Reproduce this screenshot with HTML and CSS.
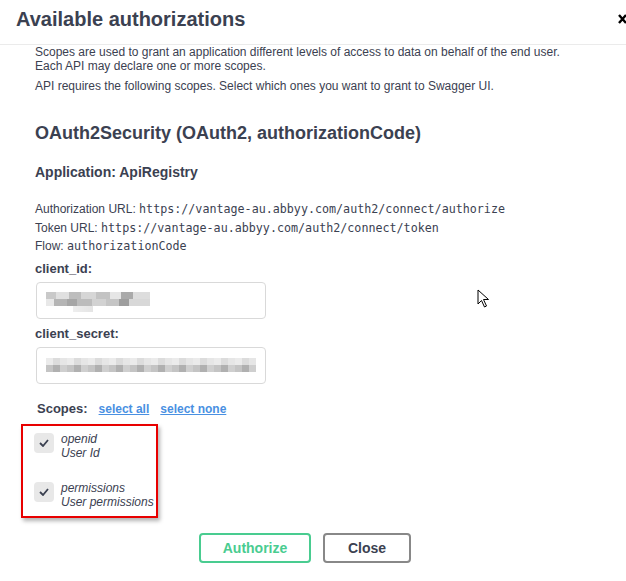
FILE: index.html
```
<!DOCTYPE html>
<html lang="en">
<head>
    <meta charset="UTF-8">
    <meta name="viewport" content="width=device-width, initial-scale=1.0">
    <title>Available authorizations</title>
    <link rel="stylesheet" href="styles.css">
</head>
<body>

    <!-- Cabecalho do modal -->
    <div class="modal-header">
        <h3>Available authorizations</h3>
        <svg class="close-x" width="8" height="10" viewBox="0 0 8 10">
            <path d="M1 1 L8 9 M8 1 L1 9" stroke="#000" stroke-width="2.4" fill="none"/>
        </svg>
    </div>

    <div class="modal-body">
        <p class="desc">Scopes are used to grant an application different levels of access to data on behalf of the end user.<br>Each API may declare one or more scopes.</p>
        <p class="desc second">API requires the following scopes. Select which ones you want to grant to Swagger UI.</p>

        <h4 class="scheme">OAuth2Security (OAuth2, authorizationCode)</h4>
        <h6 class="app">Application: ApiRegistry</h6>

        <div class="urls">
            <p>Authorization URL: <code>https://vantage-au.abbyy.com/auth2/connect/authorize</code></p>
            <p>Token URL: <code>https://vantage-au.abbyy.com/auth2/connect/token</code></p>
            <p>Flow: <code>authorizationCode</code></p>
        </div>

        <label class="field-label first">client_id:</label>
        <div class="input-box">
            <div class="blur blur-id"></div>
        </div>

        <label class="field-label">client_secret:</label>
        <div class="input-box">
            <div class="blur blur-secret"></div>
        </div>

        <div class="scopes-row">
            <span class="scopes-title">Scopes:</span>
            <a href="#">select all</a>
            <a href="#">select none</a>
        </div>

        <!-- Lista de scopes -->
        <div class="scope-list">
            <div class="scope">
                <span class="check">
                    <svg width="10" height="8" viewBox="0 0 10 8"><path d="M1 4 L4 7 L9 1" stroke="#3b4151" stroke-width="1.8" fill="none"/></svg>
                </span>
                <div class="scope-text">
                    <span>openid</span>
                    <span>User Id</span>
                </div>
            </div>
            <div class="scope">
                <span class="check">
                    <svg width="10" height="8" viewBox="0 0 10 8"><path d="M1 4 L4 7 L9 1" stroke="#3b4151" stroke-width="1.8" fill="none"/></svg>
                </span>
                <div class="scope-text">
                    <span>permissions</span>
                    <span>User permissions</span>
                </div>
            </div>
        </div>

        <div class="buttons">
            <button class="btn authorize">Authorize</button>
            <button class="btn close">Close</button>
        </div>
    </div>

    <!-- cursor do mouse -->
    <svg class="cursor" width="14" height="20" viewBox="0 0 14 20">
        <path d="M1 1 L1 15 L4.5 11.5 L7.5 18 L9.5 17 L6.5 10.5 L11.5 10.5 Z" fill="#fff" stroke="#000" stroke-width="1"/>
    </svg>

</body>
</html>
```

FILE: styles.css
```
body {
    margin: 0;
    background: #fff;
    font-family: "Liberation Sans", Arial, sans-serif;
    color: #3b4151;
    position: relative;
    overflow: hidden;
}
.modal-header {
    display: flex;
    justify-content: space-between;
    align-items: center;
    height: 45px;
    padding-left: 16px;
    border-bottom: 1px solid #ebebeb;
    box-sizing: border-box;
}
.modal-header h3 {
    margin: 0 0 5px;
    font-size: 20px;
    font-weight: bold;
}
.close-x {
    margin-bottom: 7px;
}
.modal-body {
    padding: 0 0 0 35px;
}
.desc {
    margin: 0;
    font-size: 12px;
    line-height: 14px;
}
.desc.second {
    margin-top: 6px;
}
.scheme {
    margin: 29px 0 0;
    font-size: 18px;
    line-height: 22px;
}
.app {
    margin: 20px 0 0;
    font-size: 14px;
    line-height: 16px;
}
.urls {
    margin-top: 20px;
}
.urls p {
    margin: 0;
    font-size: 12px;
    line-height: 18.5px;
}
.urls code {
    font-family: "DejaVu Sans Mono", "Liberation Mono", monospace;
    font-size: 11.7px;
}
.field-label {
    display: block;
    margin-top: 6px;
    font-size: 13px;
    font-weight: bold;
    line-height: 18px;
}
.field-label.first {
    margin-top: 4px;
}
.input-box {
    width: 230px;
    height: 37px;
    margin: 4px 0 0 1px;
    border: 1px solid #d9d9d9;
    border-radius: 4px;
    box-sizing: border-box;
    display: flex;
    align-items: center;
    padding-left: 9px;
}
.blur {
    height: 14px;
}
.blur-id {
    width: 104px;
    height: 20px;
    margin-top: 4px;
    background:
        linear-gradient(90deg, #c9c9c9 0 10%, #e0e0e0 10% 22%, #bdbdbd 22% 34%, #d6d6d6 34% 48%, #c3c3c3 48% 62%, #e6e6e6 62% 72%, #aaa 72% 84%, #ddd 84% 100%) top / 100% 7px no-repeat,
        linear-gradient(90deg, #e8e8e8 0 8%, #b5b5b5 8% 20%, #a6a6a6 20% 30%, #bcbcbc 30% 44%, #d2d2d2 44% 58%, #c5c5c5 58% 70%, #9e9e9e 70% 80%, #d8d8d8 80% 100%) 0 7px / 100% 7px no-repeat,
        linear-gradient(90deg, #eee, #e4e4e4) 27px 14px / 20px 6px no-repeat;
}
.blur-secret {
    width: 210px;
    background:
        repeating-linear-gradient(90deg, #ebebeb 0 7px, #dcdcdc 7px 14px, #e6e6e6 14px 21px) top / 100% 7px no-repeat,
        repeating-linear-gradient(90deg, #c4c4c4 0 7px, #b0b0b0 7px 14px, #cfcfcf 14px 21px) 0 7px / 100% 7px no-repeat;
}
.scopes-row {
    display: flex;
    align-items: baseline;
    gap: 11px;
    margin-top: 17px;
    padding-left: 2px;
}
.scopes-title {
    font-size: 13px;
    font-weight: bold;
}
.scopes-row a {
    color: #4990e2;
    font-size: 12px;
    font-weight: bold;
}
.scope-list {
    width: 122px;
    margin: 8px 0 0 -14px;
    padding: 6px 0 7px 11px;
    border: 2px solid #e80000;
    box-shadow: 2px 3px 4px rgba(0, 0, 0, 0.3);
    display: flex;
    flex-direction: column;
    gap: 21px;
}
.scope {
    display: flex;
    gap: 7px;
}
.check {
    width: 20px;
    height: 20px;
    margin-top: 1px;
    background: #e8e8e8;
    border-radius: 4px;
    display: flex;
    justify-content: center;
    align-items: center;
}
.scope-text {
    display: flex;
    flex-direction: column;
    font-size: 12px;
    font-style: italic;
    line-height: 14px;
}
.buttons {
    display: flex;
    gap: 12px;
    margin: 15px 0 0 164px;
}
.btn {
    height: 30px;
    background: #fff;
    border-radius: 4px;
    font-family: "Liberation Sans", Arial, sans-serif;
    font-size: 14px;
    font-weight: bold;
    cursor: pointer;
}
.btn.authorize {
    width: 112px;
    border: 2px solid #49cc90;
    color: #49cc90;
}
.btn.close {
    width: 88px;
    border: 2px solid #888;
    color: #3b4151;
}
.cursor {
    position: absolute;
    top: 289px;
    left: 477px;
}
```
